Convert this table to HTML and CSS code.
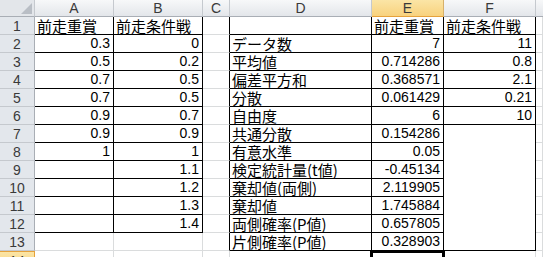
FILE: index.html
```html
<!DOCTYPE html>
<html lang="ja">
<head>
<meta charset="utf-8">
<link rel="stylesheet" href="styles.css">
</head>
<body>
<div class="frame">
<div class="sheet">
  <div class="h corner"><span class="tri"></span></div>
  <div class="h">A</div><div class="h">B</div><div class="h">C</div><div class="h">D</div><div class="h sel">E</div><div class="h">F</div><div class="h last"></div>

  <div class="r">1</div>
  <div class="c t bR bB">前走重賞</div><div class="c t bR bB">前走条件戦</div><div class="c bR"></div><div class="c bR bB"></div><div class="c t bR bB">前走重賞</div><div class="c t bR bB">前走条件戦</div><div class="c"></div>

  <div class="r">2</div>
  <div class="c n bR bB">0.3</div><div class="c n bR bB">0</div><div class="c bR"></div><div class="c t bR bB">データ数</div><div class="c n bR bB">7</div><div class="c n bR bB">11</div><div class="c"></div>

  <div class="r">3</div>
  <div class="c n bR bB">0.5</div><div class="c n bR bB">0.2</div><div class="c bR"></div><div class="c t bR bB">平均値</div><div class="c n bR bB">0.714286</div><div class="c n bR bB">0.8</div><div class="c"></div>

  <div class="r">4</div>
  <div class="c n bR bB">0.7</div><div class="c n bR bB">0.5</div><div class="c bR"></div><div class="c t bR bB">偏差平方和</div><div class="c n bR bB">0.368571</div><div class="c n bR bB">2.1</div><div class="c"></div>

  <div class="r">5</div>
  <div class="c n bR bB">0.7</div><div class="c n bR bB">0.5</div><div class="c bR"></div><div class="c t bR bB">分散</div><div class="c n bR bB">0.061429</div><div class="c n bR bB">0.21</div><div class="c"></div>

  <div class="r">6</div>
  <div class="c n bR bB">0.9</div><div class="c n bR bB">0.7</div><div class="c bR"></div><div class="c t bR bB">自由度</div><div class="c n bR bB">6</div><div class="c n bR bB">10</div><div class="c"></div>

  <div class="r">7</div>
  <div class="c n bR bB">0.9</div><div class="c n bR bB">0.9</div><div class="c bR"></div><div class="c t bR bB">共通分散</div><div class="c n bR bB">0.154286</div><div class="c bR bB merged"></div><div class="c"></div>

  <div class="r">8</div>
  <div class="c n bR bB">1</div><div class="c n bR bB">1</div><div class="c bR"></div><div class="c t bR bB">有意水準</div><div class="c n bR bB">0.05</div><div class="c"></div>

  <div class="r">9</div>
  <div class="c bR bB"></div><div class="c n bR bB">1.1</div><div class="c bR"></div><div class="c t bR bB">検定統計量(t値)</div><div class="c n bR bB">-0.45134</div><div class="c"></div>

  <div class="r">10</div>
  <div class="c bR bB"></div><div class="c n bR bB">1.2</div><div class="c bR"></div><div class="c t bR bB">棄却値(両側)</div><div class="c n bR bB">2.119905</div><div class="c"></div>

  <div class="r">11</div>
  <div class="c bR bB"></div><div class="c n bR bB">1.3</div><div class="c bR"></div><div class="c t bR bB">棄却値</div><div class="c n bR bB">1.745884</div><div class="c"></div>

  <div class="r">12</div>
  <div class="c bR bB"></div><div class="c n bR bB">1.4</div><div class="c bR"></div><div class="c t bR bB">両側確率(P値)</div><div class="c n bR bB">0.657805</div><div class="c"></div>

  <div class="r">13</div>
  <div class="c"></div><div class="c"></div><div class="c bR"></div><div class="c t bR bB">片側確率(P値)</div><div class="c n bR bB">0.328903</div><div class="c"></div>

  <div class="r sel">14</div>
  <div class="c"></div><div class="c"></div><div class="c"></div><div class="c"></div><div class="c active"></div><div class="c"></div><div class="c"></div>
</div>
</div>
</body>
</html>
```

FILE: styles.css
```css
html, body {
  margin: 0;
  padding: 0;
  background: #ffffff;
  overflow: hidden;
}

.frame {
  width: 543px;
  height: 257px;
  overflow: hidden;
}

.sheet {
  display: grid;
  grid-template-columns: 35px 79px 89px 27px 142px 72px 92px 7px;
  grid-template-rows: 17px repeat(14, 18px);
  width: 543px;
}

.h {
  box-sizing: border-box;
  background: linear-gradient(#f7f8f9, #e3e6ea);
  border-right: 1px solid #c5c9ce;
  border-bottom: 1px solid #a9aeb5;
  font-family: "Liberation Sans", Arial, sans-serif;
  font-size: 14px;
  color: #3a3a3a;
  text-align: center;
  line-height: 16px;
}

.h.sel {
  background: linear-gradient(#fbe5a6, #f8d27e);
  border-bottom-color: #e6a23c;
  border-right-color: #d6b06a;
}

.h.last {
  border-right: none;
}

.corner {
  position: relative;
  background: #e3e6ea;
}

.tri {
  position: absolute;
  right: 2px;
  bottom: 2px;
  width: 0;
  height: 0;
  border-left: 11px solid transparent;
  border-bottom: 11px solid #b9bec5;
}

.r {
  box-sizing: border-box;
  background: #e3e7ec;
  border-right: 1px solid #a9aeb5;
  border-bottom: 1px solid #c5c9ce;
  font-family: "Liberation Sans", Arial, sans-serif;
  font-size: 14px;
  color: #3a3a3a;
  text-align: center;
  line-height: 18px;
}

.r.sel {
  background: linear-gradient(#fbe5a6, #f8d27e);
  border-top: 1px solid #e6a23c;
  border-right-color: #e6a23c;
}

.c {
  box-sizing: border-box;
  border-right: 1px solid #dadcdd;
  border-bottom: 1px solid #dadcdd;
  display: flex;
  align-items: flex-end;
  white-space: nowrap;
  color: #000000;
}

.t {
  font-family: "Noto Sans CJK JP", "Noto Sans", sans-serif;
  font-size: 15px;
  line-height: 17px;
  padding-left: 2px;
}

.n {
  justify-content: flex-end;
  font-family: "Liberation Sans", Arial, sans-serif;
  font-size: 14px;
  line-height: 16px;
  padding-right: 3px;
  padding-bottom: 1px;
}

.bR {
  border-right-color: #000000;
}

.bB {
  border-bottom-color: #000000;
}

.merged {
  grid-row: span 7;
}

.active {
  position: relative;
}

.active::after {
  content: "";
  position: absolute;
  left: -2px;
  top: -1px;
  right: -2px;
  bottom: -2px;
  border: 3px solid #000000;
}
```
